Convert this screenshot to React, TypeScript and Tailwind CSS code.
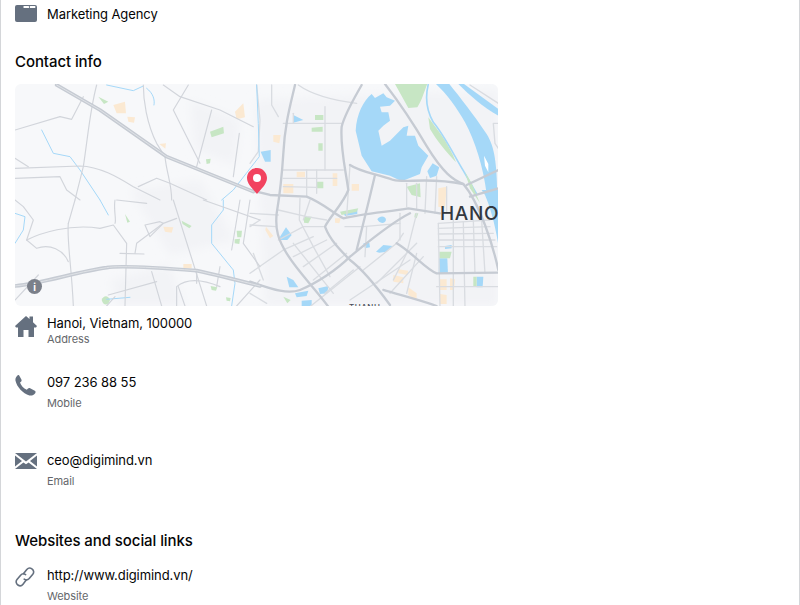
import React from 'react';

const zoomLeft = 'translate(0 0) scale(0.3333)';
const zoomRight = 'translate(250 80) scale(0.3333)';
const zoomBottom = 'translate(0 200) scale(0.3333)';
const zoomLake = 'translate(340 84) scale(0.3333)';

// right part of the map: small lakes, parks
const rightWater = [
  'M695 330 L745 330 L745 495 C735 430 720 380 705 345 Z',
  'M32 215 L62 210 L62 245 L45 245 Z',
  'M90 470 L108 442 L125 465 L112 480 L92 480 Z',
  'M278 395 L322 388 L322 402 L285 408 Z',
  'M382 418 C390 405 408 408 408 420 C405 432 388 432 382 418 Z',
  'M340 490 L358 488 L360 502 L345 505 Z',
  'M378 515 L400 495 L428 498 L410 515 L388 518 Z',
  'M567 535 L592 535 L594 582 L566 582 Z',
  'M680 590 L700 590 L698 622 L680 622 Z',
  'M110 590 L130 600 L145 622 L118 622 Z',
  'M135 640 L175 632 L170 648 L140 652 Z',
  'M205 625 L235 618 L232 640 L210 642 Z',
  'M155 662 L185 660 L185 678 L155 678 Z',
  'M130 105 L160 120 L130 128 Z',
  'M585 498 L605 495 L605 505 L585 507 Z',
];
const rightGreen = [
  'M470 320 L510 310 L512 352 L485 345 Z',
  'M195 105 L220 105 L220 120 L195 120 Z',
  'M205 190 L218 190 L218 212 L205 212 Z',
  'M185 143 L218 140 L218 155 L185 155 Z',
  'M200 305 L220 305 L220 325 L200 325 Z',
  'M270 395 L325 385 L320 395 L275 405 Z',
  'M162 410 L185 410 L175 430 L162 428 Z',
  'M568 515 L605 515 L600 535 L568 535 Z',
  'M670 590 L680 590 L680 620 L670 620 Z',
  'M645 275 L665 310 L690 370 L660 325 Z',
  'M495 400 L505 400 L500 415 L493 412 Z',
  'M100 650 L122 660 L112 670 Z',
];
const rightSand = [
  'M100 312 L130 312 L130 340 L100 340 Z',
  'M140 275 L165 275 L165 292 L140 292 Z',
  'M430 585 L460 592 L460 610 L430 605 Z',
  'M475 622 L500 640 L500 660 L475 645 Z',
  'M570 598 L590 598 L590 630 L570 630 Z',
  'M600 595 L615 598 L612 630 L600 630 Z',
  'M570 642 L590 645 L590 672 L570 672 Z',
  'M445 568 L475 572 L472 585 L445 580 Z',
  'M70 165 L92 165 L88 190 L70 185 Z',
  'M305 312 L327 312 L327 332 L305 332 Z',
  'M248 280 L262 280 L262 318 L248 318 Z',
  'M48 440 L70 468 L60 475 L46 450 Z',
  'M565 325 L590 320 L585 385 L565 380 Z',
  'M255 415 L272 415 L268 430 L255 428 Z',
];
const rightMajor = [
  'M135 15 C120 80 105 130 100 220 C95 300 90 340 80 400 C75 450 85 480 110 520 C140 570 190 620 235 680',
  'M335 15 C310 60 285 100 275 140 C270 200 285 260 295 330 C280 370 240 410 225 440 C240 480 270 510 300 540 C340 570 380 620 420 675',
  'M0 330 L60 345 L170 350 C220 370 250 400 280 415 C340 400 420 395 475 385 L570 400',
  'M0 605 C60 625 110 645 150 630 C200 610 260 570 300 530 C350 490 420 430 480 400',
  'M440 490 C490 520 530 570 560 580 L745 578',
  'M405 12 C450 70 490 130 531 200 C580 280 610 300 640 312 C690 370 730 500 745 570',
  'M375 285 C360 350 340 430 320 510',
  'M400 630 C450 645 510 660 560 678',
  'M300 255 C330 275 370 280 430 300 C470 310 530 290 640 312',
  'M660 350 L745 325',
  'M650 315 L745 270',
];
const rightMinor = [
  'M100 130 L275 130', 'M130 130 L130 100', 'M225 80 L225 270', 'M100 270 L280 270', 'M100 295 L260 295',
  'M100 320 L200 322', 'M170 270 L170 350', 'M200 270 L200 340', 'M145 15 C180 40 240 60 320 70',
  'M65 15 L65 75 L85 110', 'M20 15 L30 120 L25 215 L0 250', 'M0 400 L85 405', 'M0 435 L78 440',
  'M85 390 L170 410 L230 420', 'M150 355 L148 420 L190 500 L240 590', 'M180 360 L160 420', 'M85 480 L160 440 L220 440',
  'M130 490 L250 640', 'M100 510 L190 470', 'M130 530 L230 480', 'M160 560 L260 490', 'M190 600 L290 520',
  'M0 580 L100 510', 'M10 520 L40 600', 'M225 640 L310 570', 'M180 680 L330 560', 'M340 570 L440 490', 'M380 610 L500 490',
  'M420 640 L520 530', 'M440 490 L460 460', 'M285 440 L340 440 L450 430', 'M350 440 L345 530', 'M450 400 L450 480',
  'M500 400 L470 520 L430 600', 'M530 290 L525 400', 'M560 290 L555 400', 'M590 320 L590 400',
  'M565 430 L720 420', 'M565 445 L720 440', 'M565 462 L730 460', 'M565 480 L735 480', 'M565 500 L740 500', 'M565 430 L570 680',
  'M610 420 L610 580', 'M640 425 L645 680', 'M670 420 L675 580', 'M695 420 L705 580', 'M610 580 L610 678', 'M560 620 L745 620',
  'M730 130 L745 130 M730 130 L735 190 L745 205', 'M660 15 L745 70', 'M300 660 L480 540', 'M300 255 L290 410', 'M470 310 L470 380',
  'M500 310 L500 385', 'M0 440 L30 420', 'M0 640 L50 670', 'M470 640 L500 520',
];

const leftMinor = [
  'M290 255 C270 330 265 400 250 500 L225 600', 'M45 390 L180 350', 'M180 350 L215 358 L250 290',
  'M430 255 C430 300 440 370 470 430 L495 470 C500 520 515 550 515 600', 'M490 255 L540 290 L660 330 L760 380',
  'M565 255 L520 330 L600 490', 'M635 330 L590 500', 'M45 505 L240 498 C300 500 350 530 400 560 L480 600',
  'M718 400 L700 530', 'M415 560 L470 535 L510 550 L620 600', 'M45 535 L180 530 L200 570 L240 600', 'M45 475 L85 500',
];
const leftBlue = ['M320 255 L400 272 L430 258', 'M440 265 C460 280 465 300 462 315', 'M125 390 L160 460 L210 470 L240 510 L300 600', 'M770 255 L775 370 L778 470 L700 570 L665 600'];

const bottomMinor = [
  'M520 0 L620 318', 'M610 0 L780 60', 'M750 0 L730 130 L780 200', 'M720 0 L695 150', 'M205 70 L225 0',
  'M80 120 C120 100 210 70 300 85 L340 75 L380 130 L375 318', 'M80 120 L100 60 L70 20 L45 0', 'M360 160 L432 162',
  'M405 160 L410 130 L490 70 L530 55', 'M435 75 L480 65 L490 70 L450 110 Z', 'M205 70 C200 120 215 200 220 318',
  'M455 215 L485 318', 'M325 285 L470 245', 'M530 318 L530 260 C560 235 600 235 660 260', 'M660 200 L650 260',
  'M80 120 L110 145 C150 130 190 150 205 185', 'M345 0 C340 30 350 60 345 70', 'M350 0 L440 10', 'M780 240 L710 318',
  'M535 260 L555 318', 'M590 215 L590 250', 'M45 300 L115 225', 'M345 290 L320 318',
];
const bottomBlue = ['M670 0 L670 30 L635 75 L635 130 L700 210 L705 250 L695 318', 'M300 0 L325 45', 'M45 40 L75 50 L70 90 L45 130', 'M320 298 L390 292'];

function MapDrawing() {
  return (
    <svg viewBox="15 84 483 222" className="block w-full h-full">
      <defs>
        <filter id="soft"><feGaussianBlur stdDeviation="5" /></filter>
      </defs>
      <rect x="15" y="84" width="483" height="222" fill="#f7f8fa" />
      {/* built up patches */}
      <g fill="#f2f3f6" filter="url(#soft)">
        <path d="M130 190 L200 180 L235 240 L170 255 Z" />
        <path d="M110 280 L170 265 L185 306 L120 306 Z" />
        <path d="M255 100 L498 90 L498 306 L265 306 Z" />
        <path d="M190 100 L240 120 L235 165 L195 150 Z" />
      </g>

      {/* West Lake and Red River */}
      <g transform={zoomLake}>
        <path d="M47 140 C50 90 70 50 95 30 L105 42 L130 28 L140 40 L165 50 L150 65 L120 68 L125 85 L145 85 L150 110 L130 125 L115 140 L125 185 L150 170 L190 130 L205 125 L200 155 L225 155 L235 185 L265 215 L245 250 L240 270 L185 292 L150 275 L95 262 L65 215 Z" fill="#a5d8f8" />
        <path d="M262 262 L278 238 L298 250 L290 275 L270 282 Z" fill="#a5d8f8" />
        <path d="M165 0 L262 0 C250 30 245 50 232 70 L205 72 Z" fill="#c7e6c4" />
        <path d="M265 100 C290 135 325 175 348 235 C320 205 290 170 270 135 Z" fill="#c7e6c4" />
        <path d="M288 0 L328 0 C360 40 400 90 440 150 C465 190 470 240 472 330 L440 330 C430 250 405 170 375 115 C350 70 320 30 288 0 Z" fill="#a5d8f8" />
        <path d="M355 0 L372 0 L475 75 L475 95 C430 70 390 35 355 0 Z" fill="#a5d8f8" />
        <path d="M265 0 C255 40 260 80 280 115 C310 150 340 210 370 260 L410 330" fill="none" stroke="#a5d8f8" strokeWidth="5" />
        <path d="M432 215 L445 240 L445 265 L435 245 Z" fill="#ffffff" />
      </g>

      <g transform={zoomRight} fill="none" strokeLinecap="round" strokeLinejoin="round">
        {rightWater.map(d => <path key={d} d={d} fill="#a5d8f8" />)}
        {rightGreen.map(d => <path key={d} d={d} fill="#c7e6c4" />)}
        {rightSand.map(d => <path key={d} d={d} fill="#fbe9d2" />)}
        {rightMinor.map(d => <path key={d} d={d} stroke="#d9dce1" strokeWidth="4" />)}
        {rightMajor.map(d => <path key={d} d={d} stroke="#c6cbd3" strokeWidth="7" />)}
      </g>

      <g transform={zoomLeft} fill="none" strokeLinecap="round" strokeLinejoin="round">
        <path d="M295 290 L325 305 L312 312 Z" fill="#c7e6c4" />
        <path d="M630 395 L670 380 L672 400 L635 412 Z" fill="#c7e6c4" />
        <path d="M618 478 L632 476 L630 490 L620 492 Z" fill="#c7e6c4" />
        <path d="M340 315 L375 305 L378 340 L350 340 Z" fill="#fbe9d2" />
        <path d="M382 350 L405 352 L402 368 L385 365 Z" fill="#fbe9d2" />
        <path d="M705 335 L730 310 L735 352 L710 358 Z" fill="#fbe9d2" />
        <path d="M478 432 L498 430 L496 446 Z" fill="#fbe9d2" />
        {leftBlue.map(d => <path key={d} d={d} stroke="#a5d8f8" strokeWidth="3" />)}
        {leftMinor.map(d => <path key={d} d={d} stroke="#d2d5db" strokeWidth="3.5" />)}
        <path d="M170 255 L300 330 L500 470 L760 575" stroke="#c6cbd3" strokeWidth="11" />
        <path d="M170 255 L300 330 L500 470 L760 575" stroke="#dfe2e6" strokeWidth="3" />
      </g>

      <g transform={zoomBottom} fill="none" strokeLinecap="round" strokeLinejoin="round">
        <path d="M305 300 C310 285 325 285 330 300 C325 318 310 318 305 300 Z" fill="#c7e6c4" />
        <path d="M375 42 L390 65 L382 68 Z" fill="#c7e6c4" />
        <path d="M545 62 L575 78 L568 85 L548 72 Z" fill="#c7e6c4" />
        <path d="M710 92 L726 92 L724 112 L712 112 Z" fill="#c7e6c4" />
        <path d="M704 118 L720 116 L718 132 L704 130 Z" fill="#c7e6c4" />
        <path d="M632 258 L652 262 L648 272 L635 270 Z" fill="#c7e6c4" />
        <path d="M678 292 L692 294 L690 304 L680 302 Z" fill="#c7e6c4" />
        <path d="M490 80 L520 82 L515 98 L495 95 Z" fill="#fbe9d2" />
        <path d="M550 192 L575 192 L575 205 L550 205 Z" fill="#fbe9d2" />
        {bottomBlue.map(d => <path key={d} d={d} stroke="#a5d8f8" strokeWidth="3" />)}
        {bottomMinor.map(d => <path key={d} d={d} stroke="#d2d5db" strokeWidth="3.5" />)}
        <path d="M45 258 C130 250 230 215 320 203 C360 195 500 205 590 212 C650 225 710 240 780 258" stroke="#c6cbd3" strokeWidth="11" />
        <path d="M45 258 C130 250 230 215 320 203 C360 195 500 205 590 212 C650 225 710 240 780 258" stroke="#dfe2e6" strokeWidth="3" />
      </g>

      {/* pin */}
      <path d="M257 168 C251 168 247 173 247 178 C247 184 253 189 257 194 C261 189 267 184 267 178 C267 173 263 168 257 168 Z" fill="#f2435f" />
      <circle cx="257" cy="178" r="4" fill="#ffffff" />
    </svg>
  );
}

const iconColor = '#65707f';

function BriefcaseIcon() {
  return (
    <svg width="22" height="17" viewBox="0 0 22 17" className="block">
      <path d="M0 2 Q0 0 2 0 H20 Q22 0 22 2 V15 Q22 17 20 17 H2 Q0 17 0 15 Z" fill={iconColor} />
      <rect x="8.5" y="1" width="5.5" height="2" rx="0.5" fill="#fff" />
      <rect x="14.8" y="1" width="5.5" height="2" rx="0.5" fill="#fff" />
    </svg>
  );
}

function HomeIcon() {
  return (
    <svg width="22" height="21" viewBox="0 0 22 21" className="block">
      <path d="M11 0 L14.5 3 V0.5 H18 V6.2 L22 10 L21 11.5 H19 V21 H13.5 V14 H8.5 V21 H3 V11.5 H1 L0 10 Z" fill={iconColor} />
    </svg>
  );
}

function PhoneIcon() {
  return (
    <svg width="21" height="21" viewBox="0 0 21 21" className="block">
      <path d="M4.2 0.4 L6.4 4.6 C6.8 5.4 6.6 6.2 6 6.7 L5 7.6 C5.8 10.4 8.6 13.4 11.8 14.8 L13 13.6 C13.6 13 14.4 12.9 15.1 13.3 L19.8 15.8 C20.7 16.3 20.8 17.4 20.2 18.2 C18.8 20 16.6 21 14.4 20.4 C7.8 18.6 1.9 12 0.5 5.8 C0.1 3.8 1 2 2.4 0.6 C3 0 3.8 -0.1 4.2 0.4 Z" fill={iconColor} />
    </svg>
  );
}

function MailIcon() {
  return (
    <svg width="22" height="16" viewBox="0 0 22 16" className="block">
      <path d="M0 0 H22 L11 8.5 Z" fill={iconColor} />
      <path d="M0 2.4 L7 8 L0 13.6 Z M22 2.4 L15 8 L22 13.6 Z" fill={iconColor} />
      <path d="M0 16 L8.4 9.4 L11 11.2 L13.6 9.4 L22 16 Z" fill={iconColor} />
    </svg>
  );
}

function LinkIcon() {
  return (
    <svg width="20" height="20" viewBox="0 0 20 20" fill="none" stroke={iconColor} strokeWidth="1.6" className="block">
      <path d="M8.6 6.6 L11.8 2.6 C13.1 1 15.2 0.6 16.9 1.8 C18.8 3.1 19.2 5.5 17.8 7.2 L14.2 11.6 C12.9 13.1 10.8 13.3 9.2 12.2" strokeLinecap="round" />
      <path d="M11.2 13 L8 17.2 C6.7 18.9 4.6 19.2 2.9 18 C1 16.7 0.6 14.3 2 12.6 L5.6 8.2 C6.9 6.7 9 6.5 10.6 7.6" strokeLinecap="round" />
    </svg>
  );
}

export default function App() {
  return (
    <div className="h-[605px] w-[800px] overflow-hidden bg-white border-x border-[#d4d6d9] font-[Inter,sans-serif] text-[#050505] tracking-[-0.08px]">
      <div className="pl-[14px]">
        <div className="flex h-[23px] pt-[5px]">
          <div className="w-[32px]"><BriefcaseIcon /></div>
          <span className="text-[13px] leading-[18px]">Marketing Agency</span>
        </div>

        <h2 className="mt-[28px] text-[15px] leading-[22px] font-medium">Contact info</h2>

        <div className="relative mt-[11px] w-[483px] h-[222px] rounded-md overflow-hidden">
          <MapDrawing />
          <span className="absolute left-[425px] top-[118px] text-[19px] leading-[24px] font-medium tracking-[0.7px] text-[#33383f]">HANOI</span>
          <span className="absolute left-[334px] top-[218px] text-[8px] leading-[10px] font-medium tracking-[0.5px] text-[#4a4f57]">THANH</span>
          <span className="absolute left-[12px] top-[195px] flex items-center justify-center w-[15px] h-[15px] rounded-full bg-[#7b808a] text-white text-[10px] leading-none font-bold">i</span>
        </div>

        <div className="flex h-[40px] mt-[9px]">
          <div className="w-[32px] pt-[1px]"><HomeIcon /></div>
          <div>
            <div className="text-[13px] leading-[16px]">Hanoi, Vietnam, 100000</div>
            <div className="text-[11px] leading-[16px] text-[#65676b]">Address</div>
          </div>
        </div>

        <div className="flex h-[78px] mt-[19px]">
          <div className="w-[32px] pt-[1px]"><PhoneIcon /></div>
          <div>
            <div className="text-[13px] leading-[16px]">097 236 88 55</div>
            <div className="text-[11px] leading-[16px] mt-[5px] text-[#65676b]">Mobile</div>
          </div>
        </div>

        <div className="flex h-[60px]">
          <div className="w-[32px] pt-[1px]"><MailIcon /></div>
          <div>
            <div className="text-[13px] leading-[16px]">ceo@digimind.vn</div>
            <div className="text-[11px] leading-[16px] mt-[5px] text-[#65676b]">Email</div>
          </div>
        </div>

        <h2 className="mt-[11px] pt-[7px] text-[15px] leading-[22px] font-medium">Websites and social links</h2>

        <div className="flex mt-[15px]">
          <div className="w-[32px]"><LinkIcon /></div>
          <div>
            <div className="text-[13px] leading-[16px]">http://www.digimind.vn/</div>
            <div className="text-[11px] leading-[16px] mt-[5px] text-[#65676b]">Website</div>
          </div>
        </div>
      </div>
    </div>
  );
}
